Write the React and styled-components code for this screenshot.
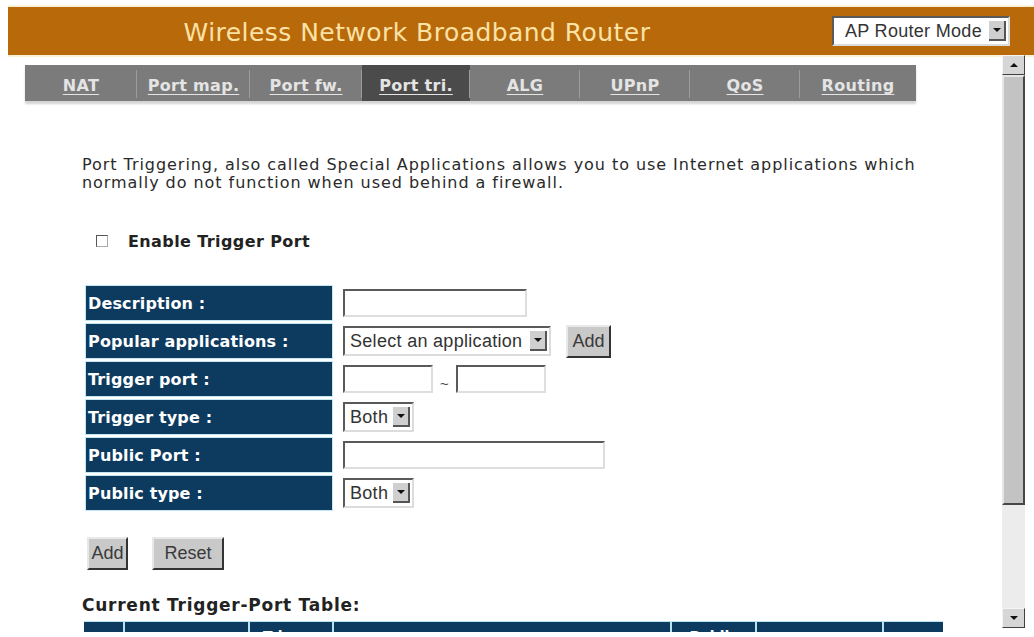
import styled, { createGlobalStyle } from "styled-components";

const tabs = [
  { label: "NAT", width: 112 },
  { label: "Port map.", width: 113 },
  { label: "Port fw.", width: 112 },
  { label: "Port tri.", width: 108, active: true },
  { label: "ALG", width: 110 },
  { label: "UPnP", width: 110 },
  { label: "QoS", width: 110 },
  { label: "Routing", width: 116 },
];

const columns = [
  { title: "NO.", width: 41 },
  { title: "Description", width: 125 },
  { title: "Trigger type", width: 84 },
  { title: "Trigger port", width: 338 },
  { title: "Public type", width: 85 },
  { title: "Public port", width: 127 },
  { title: "Select", width: 59 },
];

function Dropdown({ value, width, inset = 5 }) {
  return (
    <SelectBox $width={width} $inset={inset}>
      <SelectText>{value}</SelectText>
      <ArrowButton>
        <TriangleDown />
      </ArrowButton>
    </SelectBox>
  );
}

function App() {
  return (
    <>
      <GlobalStyle />
      <Page>
        <Header>
          <Title>Wireless Network Broadband Router</Title>
          <Dropdown value="AP Router Mode" width={178} inset={11} />
        </Header>
        <Body>
          <Frame>
            <TabBar>
              {tabs.map((t, i) => (
                <Tab key={t.label} $width={t.width} $active={t.active} $sep={i < tabs.length - 1}>
                  <TabLink>{t.label}</TabLink>
                </Tab>
              ))}
            </TabBar>
            <Content>
              <Intro>
                Port Triggering, also called Special Applications allows you to use Internet applications which
                <br />
                normally do not function when used behind a firewall.
              </Intro>
              <EnableRow>
                <CheckBox />
                <EnableLabel>Enable Trigger Port</EnableLabel>
              </EnableRow>
              <FormTable>
                <FormRow>
                  <Label>Description :</Label>
                  <Value>
                    <TextInput $width={184} />
                  </Value>
                </FormRow>
                <FormRow>
                  <Label>Popular applications :</Label>
                  <Value>
                    <Dropdown value="Select an application" width={208} />
                    <Button $width={45} $ml={15}>Add</Button>
                  </Value>
                </FormRow>
                <FormRow>
                  <Label>Trigger port :</Label>
                  <Value>
                    <TextInput $width={90} />
                    <Tilde>~</Tilde>
                    <TextInput $width={90} />
                  </Value>
                </FormRow>
                <FormRow>
                  <Label>Trigger type :</Label>
                  <Value>
                    <Dropdown value="Both" width={71} />
                  </Value>
                </FormRow>
                <FormRow>
                  <Label>Public Port :</Label>
                  <Value>
                    <TextInput $width={262} />
                  </Value>
                </FormRow>
                <FormRow>
                  <Label>Public type :</Label>
                  <Value>
                    <Dropdown value="Both" width={71} />
                  </Value>
                </FormRow>
              </FormTable>
              <ButtonRow>
                <Button $width={41}>Add</Button>
                <Button $width={72}>Reset</Button>
              </ButtonRow>
              <TableTitle>Current Trigger-Port Table:</TableTitle>
              <TriggerTable>
                {columns.map((c) => (
                  <HeadCell key={c.title} $width={c.width}>
                    {c.title}
                  </HeadCell>
                ))}
              </TriggerTable>
            </Content>
          </Frame>
          <ScrollBar>
            <ScrollButton>
              <TriangleUp />
            </ScrollButton>
            <Thumb />
            <Track />
            <ScrollButton>
              <TriangleDown />
            </ScrollButton>
          </ScrollBar>
        </Body>
      </Page>
    </>
  );
}

export default App;

const GlobalStyle = createGlobalStyle`
  html, body {
    margin: 0;
    padding: 0;
    background: #ffffff;
    overflow: hidden;
  }
  body {
    font-family: "DejaVu Sans", Verdana, sans-serif;
  }
`;

const Page = styled.div`
  width: 1034px;
  height: 637px;
  padding-top: 7px;
  box-sizing: border-box;
  display: flex;
  flex-direction: column;
`;

const Header = styled.div`
  margin-left: 8px;
  height: 48px;
  flex-shrink: 0;
  display: flex;
  align-items: center;
  background: #b8690a;
  box-shadow: 0 -2px 0 #fbf1d6, 0 2px 0 #fbf1d6;
  padding-right: 24px;
`;

const Title = styled.div`
  flex: 1;
  text-align: center;
  color: #fbe2a6;
  font-size: 25px;
  letter-spacing: 0.45px;
  padding-top: 3px;
  padding-right: 6px;
`;

const SelectBox = styled.div`
  width: ${(p) => p.$width}px;
  height: 30px;
  box-sizing: border-box;
  display: flex;
  align-items: center;
  background: #ffffff;
  border: 2px solid;
  border-color: #5a5a5a #dcdcdc #dcdcdc #5a5a5a;
  padding: 2px 2px 2px ${(p) => p.$inset}px;
`;

const SelectText = styled.span`
  flex: 1;
  font-family: "Liberation Sans", Arial, sans-serif;
  font-size: 18px;
  letter-spacing: 0.3px;
  color: #333333;
  white-space: nowrap;
  overflow: hidden;
`;

const ArrowButton = styled.span`
  width: 17px;
  height: 20px;
  flex-shrink: 0;
  display: flex;
  align-items: center;
  justify-content: center;
  background: #cfcfcf;
  border-right: 2px solid #555555;
  border-bottom: 2px solid #555555;
  box-sizing: border-box;
`;

const TriangleDown = styled.span`
  width: 0;
  height: 0;
  border-left: 4px solid transparent;
  border-right: 4px solid transparent;
  border-top: 4px solid #111111;
`;

const TriangleUp = styled.span`
  width: 0;
  height: 0;
  border-left: 4px solid transparent;
  border-right: 4px solid transparent;
  border-bottom: 4px solid #111111;
`;

const Body = styled.div`
  display: flex;
  height: 577px;
`;

const Frame = styled.div`
  flex: 1;
  overflow: hidden;
  padding-top: 10px;
`;

const TabBar = styled.div`
  display: flex;
  margin-left: 25px;
  width: 891px;
  height: 36px;
  background: #7b7b7b;
  box-shadow: 0 3px 2px #d4d4d4;
`;

const Tab = styled.div`
  position: relative;
  width: ${(p) => p.$width}px;
  display: flex;
  align-items: center;
  justify-content: center;
  padding-top: 5px;
  box-sizing: border-box;
  background: ${(p) => (p.$active ? "#4b4b4b" : "transparent")};
  &::after {
    content: "";
    display: ${(p) => (p.$sep ? "block" : "none")};
    position: absolute;
    right: 0;
    top: 5px;
    bottom: 3px;
    width: 1px;
    background: #9c9c9c;
  }
`;

const TabLink = styled.span`
  color: #e4e4e4;
  font-weight: bold;
  font-size: 16px;
  letter-spacing: 0.3px;
  text-decoration: underline;
  text-underline-offset: 3px;
`;

const Content = styled.div`
  padding-left: 82px;
  padding-top: 55px;
`;

const Intro = styled.p`
  margin: 0;
  font-size: 16px;
  letter-spacing: 0.95px;
  line-height: 18px;
  color: #2a2a2a;
`;

const EnableRow = styled.div`
  display: flex;
  align-items: center;
  margin-top: 40px;
  padding-left: 14px;
  height: 18px;
`;

const CheckBox = styled.span`
  width: 12px;
  height: 12px;
  box-sizing: border-box;
  border: 1px solid #555555;
  border-right-color: #aaaaaa;
  border-bottom-color: #aaaaaa;
  background: #ffffff;
  margin-right: 20px;
`;

const EnableLabel = styled.span`
  font-weight: bold;
  font-size: 16px;
  letter-spacing: 0.4px;
  color: #222222;
`;

const FormTable = styled.div`
  margin-top: 36px;
  margin-left: 4px;
  display: flex;
  flex-direction: column;
  gap: 4px;
`;

const FormRow = styled.div`
  display: flex;
  height: 34px;
`;

const Label = styled.div`
  width: 246px;
  box-sizing: border-box;
  background: #0d3b5f;
  box-shadow: 0 0 0 1px #c4e8f2;
  color: #ffffff;
  font-weight: bold;
  font-size: 16px;
  letter-spacing: 0.15px;
  display: flex;
  align-items: center;
  padding-left: 2px;
`;

const Value = styled.div`
  display: flex;
  align-items: center;
  padding-left: 11px;
`;

const TextInput = styled.span`
  display: block;
  width: ${(p) => p.$width}px;
  height: 28px;
  box-sizing: border-box;
  background: #ffffff;
  border: 2px solid;
  border-color: #5a5a5a #dedede #dedede #5a5a5a;
`;

const Tilde = styled.span`
  width: 23px;
  text-align: center;
  font-family: "Liberation Sans", Arial, sans-serif;
  font-size: 15px;
  color: #444444;
  padding-top: 8px;
`;

const Button = styled.span`
  width: ${(p) => p.$width}px;
  height: 33px;
  margin-left: ${(p) => p.$ml || 0}px;
  box-sizing: border-box;
  display: flex;
  align-items: center;
  justify-content: center;
  background: #c9c9c9;
  border: 2px solid;
  border-color: #e8e8e8 #333333 #333333 #e8e8e8;
  font-family: "Liberation Sans", Arial, sans-serif;
  font-size: 18px;
  color: #3a3a3a;
`;

const ButtonRow = styled.div`
  display: flex;
  gap: 24px;
  margin-top: 27px;
  margin-left: 5px;
`;

const TableTitle = styled.div`
  margin-top: 25px;
  font-weight: bold;
  font-size: 17px;
  letter-spacing: 0.75px;
  color: #222222;
`;

const TriggerTable = styled.div`
  display: flex;
  margin-top: 6px;
  margin-left: 2px;
  width: 859px;
  background: #0d3b5f;
  border-top: 1px solid #b8e4f0;
`;

const HeadCell = styled.div`
  width: ${(p) => p.$width}px;
  height: 46px;
  flex-shrink: 0;
  box-sizing: border-box;
  display: flex;
  align-items: center;
  justify-content: center;
  border-right: 2px solid #b8e4f0;
  &:last-child {
    border-right: none;
  }
  color: #ffffff;
  font-weight: bold;
  font-size: 14px;
  text-align: center;
  padding: 0 4px;
  line-height: 18px;
`;

const ScrollBar = styled.div`
  width: 23px;
  height: 573px;
  margin-right: 9px;
  display: flex;
  flex-direction: column;
  background: #ebebeb;
`;

const ScrollButton = styled.div`
  height: 20px;
  flex-shrink: 0;
  box-sizing: border-box;
  display: flex;
  align-items: center;
  justify-content: center;
  background: #d6d6d6;
  border: 1px solid;
  border-color: #f4f4f4 #404040 #404040 #f4f4f4;
`;

const Thumb = styled.div`
  height: 430px;
  box-sizing: border-box;
  background: #c3c3c3;
  border: 2px solid;
  border-color: #e6e6e6 #474747 #474747 #e6e6e6;
`;

const Track = styled.div`
  flex: 1;
  background: #ececec;
`;
